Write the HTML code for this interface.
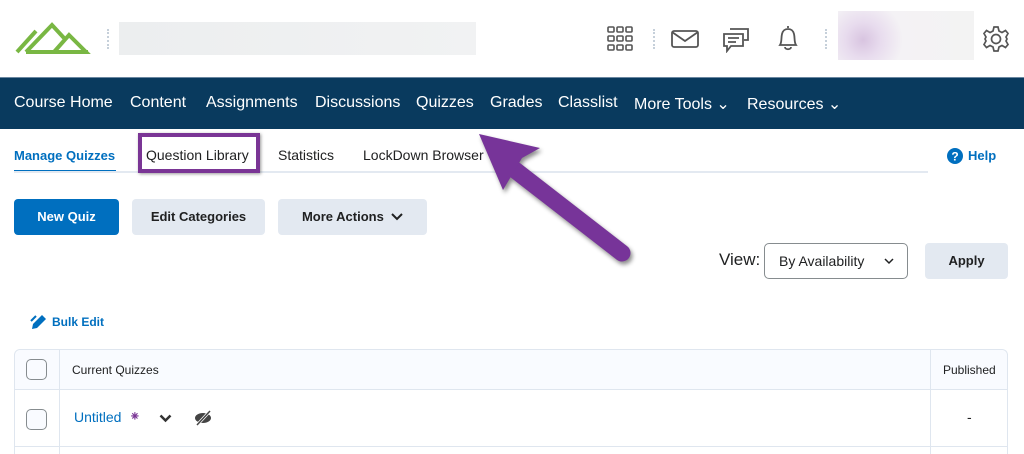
<!DOCTYPE html>
<html><head><meta charset="utf-8"><style>
*{margin:0;padding:0;box-sizing:border-box}
html,body{width:1024px;height:454px;overflow:hidden}
body{background:#fff;font-family:"Liberation Sans",sans-serif;position:relative;color:#202122}
.a{position:absolute;white-space:nowrap}
.nav{position:absolute;left:0;top:77px;width:1024px;height:52px;background:#093a5e;border-top:1px solid #6b87a0}
.nav span{position:absolute;top:16px;color:#fff;font-size:16px}
.tab{position:absolute;top:147px;font-size:14px;color:#202122}
.btn{position:absolute;top:199px;height:36px;border-radius:4px;background:#e3e9f1;font-size:13px;font-weight:bold;text-align:center;line-height:36px;color:#202122}
.cb{position:absolute;width:21px;height:21px;border:1px solid #868c8f;border-radius:5px;background:#f9fbff}
</style></head><body>
<svg class="a" style="left:14px;top:21px" width="78" height="34" viewBox="0 0 78 34"><g fill="none" stroke="#79b743" stroke-width="4" stroke-linejoin="miter"><path d="M3 31 L22 10"/><path d="M12 31 L38 4 L50 17"/><path d="M40 31 L55 14 L72 31 Z"/><path d="M12 31 H74"/></g></svg>
<div class="a" style="left:107px;top:29px;width:2px;height:20px;border-left:2px dotted #c6d0da"></div>
<div class="a" style="left:119px;top:22px;width:357px;height:33px;background:linear-gradient(90deg,#eceeef,#f1f2f3)"></div>
<svg class="a" style="left:607px;top:26px" width="26" height="26" viewBox="0 0 26 26" fill="none" stroke="#555" stroke-width="1.6"><rect x="1" y="1" width="6" height="5" rx="1"/><rect x="10" y="1" width="6" height="5" rx="1"/><rect x="19" y="1" width="6" height="5" rx="1"/><rect x="1" y="10" width="6" height="5" rx="1"/><rect x="10" y="10" width="6" height="5" rx="1"/><rect x="19" y="10" width="6" height="5" rx="1"/><rect x="1" y="19" width="6" height="5" rx="1"/><rect x="10" y="19" width="6" height="5" rx="1"/><rect x="19" y="19" width="6" height="5" rx="1"/></svg>
<div class="a" style="left:653px;top:29px;height:20px;border-left:2px dotted #c6d0da"></div>
<svg class="a" style="left:671px;top:30px" width="28" height="18" viewBox="0 0 28 18" fill="none" stroke="#555" stroke-width="1.8"><rect x="1" y="1" width="26" height="16" rx="2"/><path d="M1 2 L14 11 L27 2"/></svg>
<svg class="a" style="left:722px;top:25px" width="28" height="28" viewBox="0 0 28 28" fill="none" stroke="#555" stroke-width="1.8"><path d="M8 4 H26 V15 H22"/><path d="M2 9 H21 V21 H9 L5 26 V21 H2 Z"/><path d="M6 13 H17 M6 17 H14"/></svg>
<svg class="a" style="left:775px;top:24px" width="26" height="28" viewBox="0 0 26 28" fill="none" stroke="#555" stroke-width="1.8"><path d="M13 2 V4 M5 21 C7 18 6 14 7 10 C8 6 10 5 13 5 C16 5 18 6 19 10 C20 14 19 18 21 21 Z"/><path d="M10 23 C10 26 16 26 16 23"/></svg>
<div class="a" style="left:825px;top:29px;height:20px;border-left:2px dotted #c6d0da"></div>
<div class="a" style="left:838px;top:11px;width:136px;height:49px;background:radial-gradient(circle at 25px 29px,#d8c4e0 0,#e8dcee 18px,#f4f2f5 40px,#f3f3f3 100px)"></div>
<svg class="a" style="left:982px;top:25px" width="28" height="28" viewBox="0 0 28 28" fill="none" stroke="#555" stroke-width="1.7"><path d="M12 2 H16 L17 6 L20 7.5 L23.5 5.5 L26 8.5 L24 12 L25 14 L24 16 L26 19.5 L23.5 22.5 L20 20.5 L17 22 L16 26 H12 L11 22 L8 20.5 L4.5 22.5 L2 19.5 L4 16 L3 14 L4 12 L2 8.5 L4.5 5.5 L8 7.5 L11 6 Z"/><circle cx="14" cy="14" r="4.5"/></svg>
<div class="nav">
<span style="left:14px">Course Home</span><span style="left:130px">Content</span><span style="left:206px">Assignments</span><span style="left:315px">Discussions</span><span style="left:416px">Quizzes</span><span style="left:490px">Grades</span><span style="left:558px">Classlist</span><span style="left:634px">More Tools ⌄</span><span style="left:747px">Resources ⌄</span>
</div>
<div class="tab" style="left:14px;color:#006fbf;font-weight:bold;font-size:13px;top:148px">Manage Quizzes</div>
<div class="a" style="left:14px;top:170px;width:102px;height:3px;background:#006fbf"></div>
<div class="a" style="left:14px;top:171px;width:914px;height:2px;background:#e3e9f1"></div>
<div class="a" style="left:138px;top:133px;width:122px;height:40px;border:4px solid #7a3595;box-shadow:1px 1px 3px rgba(0,0,0,.4);background:#fff"></div>
<div class="tab" style="left:146px">Question Library</div>
<div class="tab" style="left:278px">Statistics</div>
<div class="tab" style="left:363px">LockDown Browser</div>
<svg class="a" style="left:947px;top:148px" width="16" height="16" viewBox="0 0 16 16"><circle cx="8" cy="8" r="8" fill="#006fbf"/><text x="8" y="12.5" text-anchor="middle" fill="#fff" font-size="12" font-weight="bold" font-family="Liberation Sans">?</text></svg>
<div class="a" style="left:968px;top:148px;font-size:13px;font-weight:bold;color:#006fbf">Help</div>
<div class="btn" style="left:14px;width:105px;background:#006fbf;color:#fff">New Quiz</div>
<div class="btn" style="left:132px;width:133px">Edit Categories</div>
<div class="btn" style="left:278px;width:149px">More Actions &nbsp;<svg width="12" height="8" viewBox="0 0 12 8"><path d="M1 1 L6 6 L11 1" fill="none" stroke="#202122" stroke-width="2"/></svg></div>
<div class="a" style="left:719px;top:250px;font-size:17px">View:</div>
<div class="a" style="left:764px;top:243px;width:144px;height:36px;border:1px solid #868c8f;border-radius:5px;font-size:14px;line-height:34px;padding-left:14px">By Availability<svg style="position:absolute;left:119px;top:14px" width="10" height="7" viewBox="0 0 10 7"><path d="M1 1 L5 5 L9 1" fill="none" stroke="#202122" stroke-width="1.5"/></svg></div>
<div class="btn" style="left:925px;top:243px;width:83px;height:36px">Apply</div>
<svg class="a" style="left:30px;top:313px" width="18" height="18" viewBox="0 0 18 18" fill="#006fbf"><path d="M2 16 L3 11 L12 2 L16 6 L7 15 Z"/><path d="M1 8 L6 3" stroke="#006fbf" stroke-width="2"/></svg>
<div class="a" style="left:52px;top:315px;font-size:12px;font-weight:bold;color:#006fbf">Bulk Edit</div>
<div class="a" style="left:14px;top:349px;width:994px;height:105px;border:1px solid #dfe6ef;border-bottom:none;border-radius:6px 6px 0 0"></div>
<div class="a" style="left:15px;top:350px;width:992px;height:39px;background:#f9fbff;border-radius:6px 6px 0 0"></div>
<div class="a" style="left:15px;top:389px;width:992px;height:1px;background:#dfe6ef"></div>
<div class="a" style="left:15px;top:446px;width:992px;height:1px;background:#dfe6ef"></div>
<div class="a" style="left:59px;top:350px;width:1px;height:104px;background:#dfe6ef"></div>
<div class="a" style="left:930px;top:350px;width:1px;height:104px;background:#dfe6ef"></div>
<div class="cb" style="left:26px;top:359px"></div>
<div class="cb" style="left:26px;top:409px"></div>
<div class="a" style="left:72px;top:363px;font-size:12px">Current Quizzes</div>
<div class="a" style="left:943px;top:363px;font-size:12px">Published</div>
<div class="a" style="left:74px;top:409px;font-size:14px;color:#006fbf">Untitled</div>
<div class="a" style="left:129px;top:408px;font-size:14px;color:#7a3595">⁕</div>
<svg class="a" style="left:159px;top:414px" width="13" height="9" viewBox="0 0 13 9"><path d="M1.5 1.5 L6.5 6.5 L11.5 1.5" fill="none" stroke="#333" stroke-width="2.5"/></svg>
<svg class="a" style="left:194px;top:410px" width="18" height="16" viewBox="0 0 18 16"><ellipse cx="9" cy="8" rx="8" ry="5" fill="#444"/><path d="M3 15 L16 1" stroke="#fff" stroke-width="3"/><path d="M3 15 L16 1" stroke="#444" stroke-width="1.5"/></svg>
<div class="a" style="left:967px;top:409px;font-size:14px">-</div>
<svg class="a" style="left:0;top:0;filter:drop-shadow(2px 3px 2px rgba(0,0,0,.45))" width="1024" height="454" viewBox="0 0 1024 454"><path d="M515 170 L622 253" stroke="#773499" stroke-width="17" stroke-linecap="round"/><path d="M479 134 L540 148 L522 158 L503 190 Z" fill="#773499"/></svg>
</body></html>
